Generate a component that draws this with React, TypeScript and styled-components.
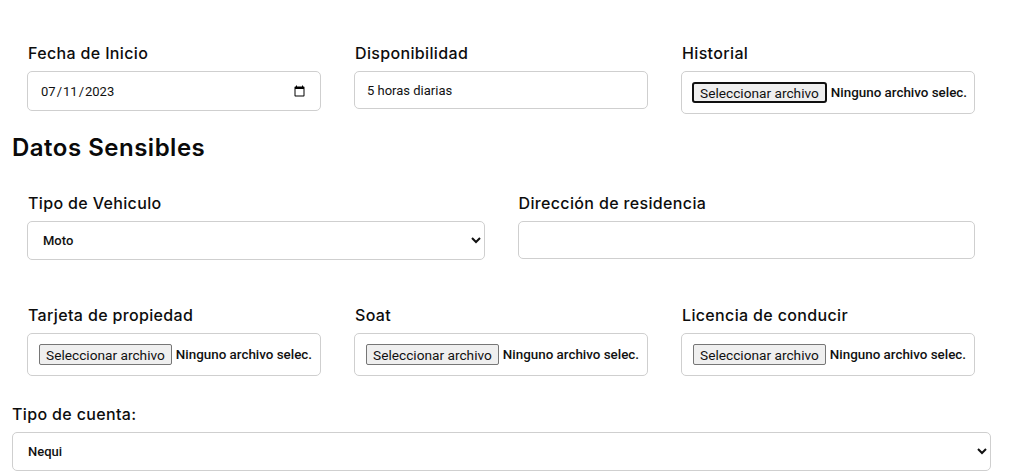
import React from "react";
import styled, { createGlobalStyle } from "styled-components";

const Global = createGlobalStyle`
  html, body { margin: 0; padding: 0; background: #fff; }
  body { font-family: Inter, "Noto Sans", sans-serif; color: #111; }
  * { box-sizing: border-box; }
`;

const Page = styled.form`
  width: 979px;
  margin-left: 12px;
  padding-top: 42px;
  display: flex;
  flex-direction: column;
`;

const Row = styled.div<{ $top?: number }>`
  display: flex;
  gap: 33px;
  padding: 0 16px 0 15px;
  margin-top: ${(p) => p.$top ?? 0}px;
  align-items: flex-start;
`;

const Field = styled.div`
  flex: 1;
  min-width: 0;
  display: flex;
  flex-direction: column;
`;

const Label = styled.label`
  font-family: Inter, "Noto Sans", sans-serif;
  font-weight: 500;
  font-size: 16px;
  letter-spacing: 0.35px;
  line-height: 22px;
  color: #0d0d0d;
  margin: 0 0 7px 1px;
`;

const Heading = styled.h2`
  margin: 16px 0 0 0;
  font-family: Inter, "Noto Sans", sans-serif;
  font-weight: 600;
  font-size: 24px;
  letter-spacing: 0.5px;
  line-height: 36px;
  color: #0a0a0a;
`;

const TextInput = styled.input`
  width: 100%;
  height: ${(p) => (p.type === "date" ? 40 : 38)}px;
  border: 1px solid #cfcfcf;
  border-radius: 5px;
  padding: 0 12px;
  font-family: Roboto, "Liberation Sans", sans-serif;
  font-size: 13px;
  color: #111;
  background: #fff;
  outline: none;
`;

const Select = styled.select`
  width: 100%;
  height: 39px;
  border: 1px solid #cfcfcf;
  border-radius: 5px;
  padding: 0 8px 0 11px;
  font-family: Roboto, "Liberation Sans", sans-serif;
  font-weight: 500;
  font-size: 13px;
  color: #111;
  background: #fff;
  outline: none;
`;

const FileBox = styled.div`
  height: 43px;
  border: 1px solid #cfcfcf;
  border-radius: 5px;
  padding: 0 10px;
  display: flex;
  align-items: center;
  gap: 4px;
  background: #fff;
`;

const FileButton = styled.button<{ $focused?: boolean }>`
  height: 21px;
  padding: 0 6px;
  background: #efefef;
  border: ${(p) => (p.$focused ? "2px solid #101010" : "1px solid #767676")};
  border-radius: ${(p) => (p.$focused ? "3px" : "2px")};
  font-family: Roboto, "Liberation Sans", sans-serif;
  font-size: 13.7px;
  color: #111;
  white-space: nowrap;
  margin-left: ${(p) => (p.$focused ? "0" : "1px")};
`;

const FileName = styled.span`
  font-family: Roboto, "Liberation Sans", sans-serif;
  font-weight: 500;
  font-size: 13.4px;
  color: #111;
  white-space: nowrap;
`;

const AccountLabel = styled(Label)`
  margin: 27px 0 7px 0;
`;

function FileField({ label, focused }: { label: string; focused?: boolean }) {
  return (
    <Field>
      <Label>{label}</Label>
      <FileBox>
        <FileButton type="button" $focused={focused}>
          Seleccionar archivo
        </FileButton>
        <FileName>Ninguno archivo selec.</FileName>
      </FileBox>
    </Field>
  );
}

export default function App() {
  return (
    <>
      <Global />
      <Page onSubmit={(e) => e.preventDefault()}>
        <Row>
          <Field>
            <Label>Fecha de Inicio</Label>
            <TextInput type="date" defaultValue="2023-07-11" />
          </Field>
          <Field>
            <Label>Disponibilidad</Label>
            <TextInput type="text" defaultValue="5 horas diarias" />
          </Field>
          <FileField label="Historial" focused />
        </Row>

        <Heading>Datos Sensibles</Heading>

        <Row $top={26}>
          <Field>
            <Label>Tipo de Vehiculo</Label>
            <Select defaultValue="moto">
              <option value="moto">Moto</option>
              <option value="carro">Carro</option>
            </Select>
          </Field>
          <Field>
            <Label>Dirección de residencia</Label>
            <TextInput type="text" />
          </Field>
        </Row>

        <Row $top={44}>
          <FileField label="Tarjeta de propiedad" />
          <FileField label="Soat" />
          <FileField label="Licencia de conducir" />
        </Row>

        <AccountLabel>Tipo de cuenta:</AccountLabel>
        <Select defaultValue="nequi">
          <option value="nequi">Nequi</option>
          <option value="daviplata">Daviplata</option>
        </Select>
      </Page>
    </>
  );
}
